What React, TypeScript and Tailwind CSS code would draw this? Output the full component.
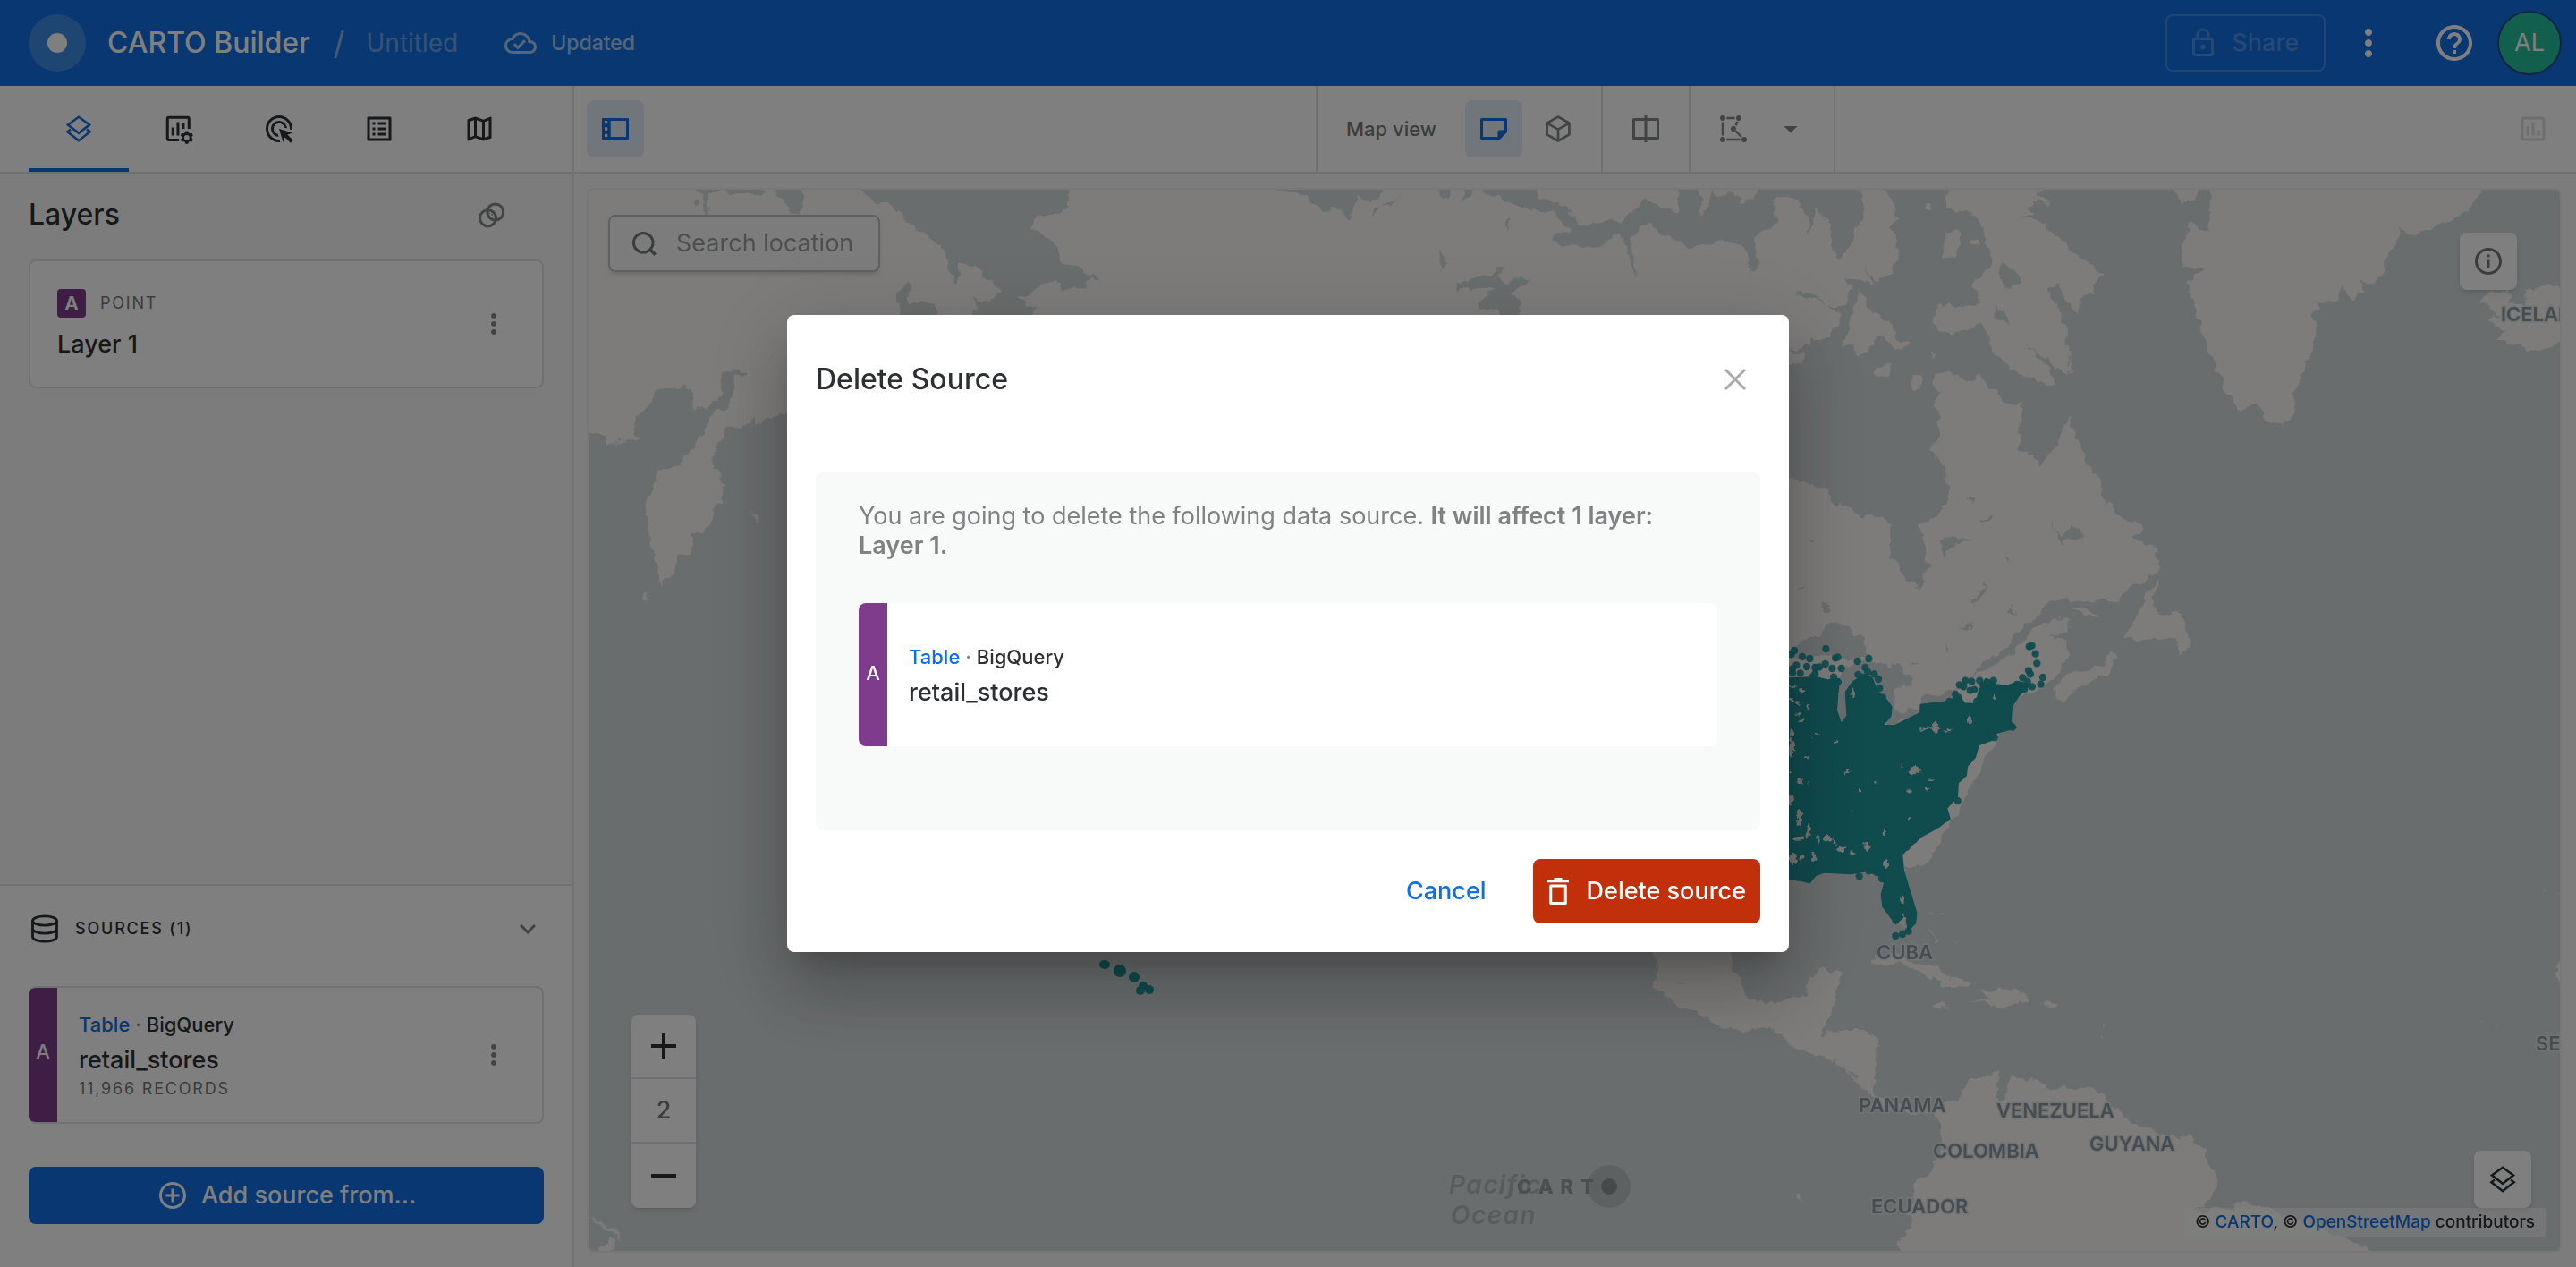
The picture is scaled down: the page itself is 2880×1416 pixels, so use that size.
import React from "react";
import {
  MdAdd,
  MdAddCircleOutline,
  MdArrowDropDown,
  MdExpandMore,
  MdHelpOutline,
  MdInfoOutline,
  MdLockOutline,
  MdMoreVert,
  MdOutlineAdsClick,
  MdOutlineCloudDone,
  MdOutlineInsertChart,
  MdOutlineListAlt,
  MdOutlineMap,
  MdRemove,
} from "react-icons/md";

type IconProps = { className?: string };

const iconSize = "size-9 shrink-0";

function LayersIcon({ className = iconSize }: IconProps) {
  return (
    <svg viewBox="0 0 24 24" className={className} fill="none" stroke="currentColor" strokeWidth="1.7" aria-hidden="true">
      <path d="M12 3.2 20 9l-8 6.2L4 9z" />
      <path d="M6 12.4 3.6 14.2 12 20.8l8.4-6.6-2.4-1.8" />
    </svg>
  );
}

function WidgetsIcon() {
  return (
    <svg viewBox="0 0 24 24" className={iconSize} fill="currentColor" aria-hidden="true">
      <path d="M4.5 2.5h14a2 2 0 0 1 2 2V12h-2V4.5h-14v14.9H12v2H4.5a2 2 0 0 1-2-2V4.500a2 2 0 0 1 2-2z" />
      <path d="M6.500 11h2v6h-2zM10.300 7h2v10h-2zM14.300 7.500h2v4.500h-2z" />
      <path
        fillRule="evenodd"
        d="M16.900 13.600h2l.35 1.300 1 .55 1.350-.35 1 1.750-.95.950v1.200l.95.950-1 1.750-1.350-.35-1 .55-.35 1.300h-2l-.35-1.300-1-.55-1.350.35-1-1.750.95-.95v-1.200l-.95-.95 1-1.750 1.350.35 1-.55zM17.900 16.700a1.900 1.900 0 1 0 0 3.800 1.900 1.900 0 0 0 0-3.800z"
      />
    </svg>
  );
}

function BlendIcon() {
  return (
    <svg viewBox="0 0 24 24" className={iconSize} fill="none" stroke="currentColor" strokeWidth="2" aria-hidden="true">
      <circle cx="9" cy="14.500" r="6" />
      <circle cx="14.500" cy="10" r="6" />
      <path d="M10 10.500v3M12 9.500v5M14 10.500v3" strokeWidth="1" strokeDasharray="1 1" />
    </svg>
  );
}

function DatabaseIcon() {
  return (
    <svg viewBox="0 0 24 24" className={iconSize} fill="none" stroke="currentColor" strokeWidth="1.900" aria-hidden="true">
      <ellipse cx="12" cy="6" rx="9" ry="3.400" />
      <path d="M3 6v12c0 1.900 4 3.400 9 3.400s9-1.500 9-3.400V6M3 12c0 1.900 4 3.400 9 3.400s9-1.500 9-3.400" />
    </svg>
  );
}

function SearchIcon() {
  return (
    <svg viewBox="0 0 24 24" className={iconSize} fill="none" stroke="currentColor" strokeWidth="2" aria-hidden="true">
      <circle cx="11.500" cy="11.500" r="7.200" />
      <path d="M16.500 16.500 20.500 20.500" strokeWidth="2.400" />
    </svg>
  );
}

function SidePanelIcon() {
  return (
    <svg viewBox="0 0 24 24" className={iconSize} fill="currentColor" fillRule="evenodd" aria-hidden="true">
      <path d="M2 4h20v16H2zM8.500 6v12H20V6zM4 6v2.200h2.200V6zM4 10.900v2.200h2.200v-2.200zM4 15.800V18h2.200v-2.200z" />
    </svg>
  );
}

function SheetIcon() {
  return (
    <svg viewBox="0 0 24 24" className={iconSize} fill="none" stroke="currentColor" strokeWidth="2" strokeLinejoin="round" aria-hidden="true">
      <path d="M3 5h18v9l-5 5H3z" />
      <path d="M21 14h-5v5z" fill="currentColor" />
    </svg>
  );
}

function CubeIcon() {
  return (
    <svg viewBox="0 0 24 24" className={iconSize} fill="none" stroke="currentColor" strokeWidth="1.800" strokeLinejoin="round" aria-hidden="true">
      <path d="M12 3l8.300 4.700v8.600L12 21l-8.300-4.700V7.700zM3.700 7.700 12 12.400l8.300-4.700M12 12.400V21" />
    </svg>
  );
}

function SplitIcon() {
  return (
    <svg viewBox="0 0 24 24" className={iconSize} fill="none" stroke="currentColor" strokeWidth="2" strokeLinejoin="round" aria-hidden="true">
      <path d="M3 5h18v14H3zM12 2v20" />
    </svg>
  );
}

function PolygonIcon() {
  return (
    <svg viewBox="0 0 24 24" className={iconSize} fill="currentColor" stroke="currentColor" strokeWidth="1.600" aria-hidden="true">
      <path fill="none" d="M7 4h6M4 7v10M7 20h10M15 6.500l-1.300 3M13.500 13.500l4.500 4.500" />
      <g stroke="none">
        <circle cx="4" cy="4" r="2" />
        <circle cx="16" cy="4" r="2" />
        <circle cx="12" cy="12" r="2" />
        <circle cx="4" cy="20" r="2" />
        <circle cx="20" cy="20" r="2" />
      </g>
    </svg>
  );
}

function TrashIcon() {
  return (
    <svg viewBox="0 0 24 24" className={iconSize} fill="none" stroke="currentColor" strokeWidth="2" aria-hidden="true">
      <path d="M6.500 8h11v13h-11z" strokeLinejoin="round" />
      <path d="M4 4.500h16M9 3h6" />
    </svg>
  );
}

/* ---------- Base map ---------- */

const WATER = "#d4dadc";
const LAND = "#faf8f4";
const STORE = "#20969c";

const storeDots: [number, number][] = [
  [154, 105], [48, 111], [38, 124], [75, 132], [100, 138], [186, 136], [194, 133], [260, 147], [298, 138],
  [286, 168], [152, 156], [90, 165], [118, 168], [132, 166], [55, 160], [42, 172], [175, 171], [206, 171],
  [68, 187], [42, 186], [118, 188], [316, 190], [294, 182], [330, 207], [276, 200], [255, 225], [262, 192], [334, 237],
  [345, 268], [300, 212], [180, 200], [195, 217], [108, 200], [845, 95], [836, 98], [857, 122], [862, 154], [834, 178],
  [840, 190], [814, 202], [882, 201], [875, 224], [846, 232], [830, 215], [820, 240], [795, 225], [602, 226],
  [622, 212], [643, 215], [652, 242], [638, 245], [616, 232], [588, 258], [598, 268], [670, 212], [682, 228],
  [716, 212], [697, 218], [712, 235], [740, 240], [765, 240], [780, 235], [800, 245], [568, 282], [660, 282],
  [596, 615], [450, 745], [425, 770], [266, 868], [298, 850], [325, 855], [342, 876], [388, 1068], [411, 1062],
  [431, 1052], [388, 1014], [720, 402], [705, 398], [780, 368], [764, 322], [615, 510], [518, 698], [95, 878], [60, 872],
];

const storeGaps: [number, number, number, number][] = [
  [452, 512, 20, 14], [520, 368, 12, 18], [490, 374, 22, 4], [560, 378, 16, 4], [636, 342, 6, 12], [246, 255, 5, 20],
  [356, 826, 10, 12], [411, 946, 5, 12], [414, 1020, 9, 20], [292, 768, 9, 14], [66, 550, 9, 14], [40, 440, 9, 34],
  [66, 672, 9, 30], [95, 718, 7, 24], [160, 742, 16, 10], [60, 742, 22, 7], [205, 778, 12, 8], [115, 802, 9, 14],
  [45, 808, 14, 20], [75, 808, 8, 12], [36, 612, 8, 16], [505, 545, 8, 4], [496, 573, 10, 4], [225, 517, 4, 9],
  [185, 421, 10, 3], [268, 583, 5, 4], [435, 674, 5, 4], [434, 582, 4, 5], [96, 560, 4, 10], [70, 345, 9, 6],
  [60, 290, 8, 5], [90, 470, 12, 4], [125, 392, 12, 3], [45, 232, 14, 4], [75, 245, 12, 5], [40, 275, 12, 5],
  [60, 325, 5, 8], [38, 388, 4, 12], [320, 552, 6, 3], [130, 742, 5, 10], [185, 752, 5, 10], [240, 790, 6, 4],
  [720, 268, 5, 5], [410, 495, 3, 10], [352, 722, 5, 10], [95, 300, 4, 6], [38, 520, 6, 5], [240, 658, 4, 3],
];

const mapLabels: { text: string; x: number; y: number }[] = [
  { text: "ICELAND", x: 2796, y: 359 },
  { text: "CUBA", x: 2098, y: 1072 },
  { text: "PANAMA", x: 2078, y: 1243 },
  { text: "VENEZUELA", x: 2232, y: 1249 },
  { text: "COLOMBIA", x: 2161, y: 1294 },
  { text: "GUYANA", x: 2336, y: 1286 },
  { text: "ECUADOR", x: 2092, y: 1356 },
  { text: "SENEGAL", x: 2835, y: 1174 },
];

function BaseMap() {
  return (
    <svg
      viewBox="658 212 2204 1186"
      preserveAspectRatio="xMidYMid slice"
      className="absolute inset-0 size-full"
      role="img"
      aria-label="World map with store locations"
    >
      <defs>
        <filter id="coast" filterUnits="userSpaceOnUse" x="600" y="150" width="2320" height="1310">
          <feTurbulence type="fractalNoise" baseFrequency="0.07" numOctaves="3" seed="4" />
          <feDisplacementMap in="SourceGraphic" scale="13" xChannelSelector="R" yChannelSelector="G" />
        </filter>
        <filter id="ragged" filterUnits="userSpaceOnUse" x="0" y="0" width="1000" height="1200">
          <feTurbulence type="fractalNoise" baseFrequency="0.06" numOctaves="2" seed="9" />
          <feDisplacementMap in="SourceGraphic" scale="24" xChannelSelector="R" yChannelSelector="G" />
        </filter>
      </defs>
      <rect x="600" y="150" width="2320" height="1310" fill={WATER} />

      <g filter="url(#coast)">
        {/* Asia and the north-western Pacific rim */}
        <g transform="translate(640 180) scale(.88 .3333)">
          <path
            fill={LAND}
            d="M-10 60V900L20 907 40 918 40 960 60 940 85 940 90 932 78 925 80 880 95 820 110 765 145 752 155 765 155 840 175 815 190 780 193 710 205 697 222 712 218 722 205 715 207 790 197 830 180 840 170 900 150 985 130 1030 112 1040 100 1100 95 1190 100 1290 108 1400 112 1430 130 1370 135 1320 150 1310 152 1250 175 1230 180 1180 178 1160 192 1140 190 1050 178 1020 182 960 195 890 205 890 215 905 232 855 234 890 245 860 262 847 300 847 1500 700V60z"
          />
          <path
            fill={WATER}
            d="M155 60V96L165 105 170 180H173L175 105 200 104 220 118 245 106 248 60zM150 120l8-5v30h-5zM258 60V96L262 130 275 150 276 185 290 180 294 130 288 96V60zM366 60V96L380 125 400 150 420 190 430 215 440 240 465 275 475 310 478 370 488 412 490 340 510 350 525 390 543 425 535 465 510 460 512 530H580L590 495 565 465 580 440 615 400 622 430 645 430 655 400 672 398 650 375 645 350 625 345 615 305 605 260 585 228 590 182 608 178 625 150 631 96V60zM425 402 430 475 445 468 462 480 465 530H415L412 440zM198 980l10-38 3 20-8 20z"
          />
          <path fill={LAND} d="M98 1440l-2 40h-4l2-30zM226 1170l10 30 2 20-8-20z" />
        </g>

        {/* Arctic Canada, Greenland, Labrador */}
        <g transform="translate(1980 180) scale(.574 .3954)">
          <path
            fill={LAND}
            d="M-300 60H60V81L75 200 90 125 110 140 118 230 133 280 155 240 165 160 180 155 170 60H205L248 130 240 160 250 165 228 185 245 210 250 260 235 310 208 340 180 290 200 345 145 330 160 360 140 410 105 410 80 375 50 372 90 400 137 422 130 470 115 495 75 500 75 525 35 530-300 530zM170 365 190 410 235 460 243 495 270 515 250 535 210 495 175 555 160 515 138 525zM20 525 65 545 60 575 20 585zM205 580 237 572 235 590 210 618 200 610zM278 605 290 615 283 652 273 635zM310 540l15 5-8 12z"
          />
          <path
            fill={LAND}
            d="M345 60H540L520 100 540 120 500 125 520 150 490 150 530 180 570 230 610 280 645 320 630 350 630 380 605 385 600 438 570 380 560 350 530 370 520 320 560 420 575 470 583 600 560 590 500 520 545 590 552 637 480 605 440 550 420 495 405 450 370 485 330 482 313 450 330 408 355 415 410 400 390 355 430 290 415 190 380 140 365 150 345 130zM335 200 365 195 375 240 360 272 335 272zM385 215l20 5v18l-20-8zM295 140l10-25 6 2-8 30z"
          />
          <path
            fill={LAND}
            d="M855 60H1400L1360 140 1340 165 1280 195 1245 210 1222 187 1225 215 1205 250 1190 320 1175 345 1150 340 1155 370 1130 390 1110 345 1105 390 1065 400 1070 425 1050 430 1065 480 1055 530 1035 580 1025 640 1015 700 1000 755 965 730 950 690 910 700 890 650 870 600 865 570 840 500 825 410 805 350 845 305 800 300 800 240 815 170 850 200 855 160zM775 60H835L830 105 800 115z"
          />
          <path
            fill={LAND}
            d="M1380 400 1405 365 1435 370 1440 400 1465 405 1475 365 1500 355 1570 355V500L1537 510 1495 540 1450 515 1415 510 1430 480 1390 450 1420 430z"
          />
          <path
            fill={LAND}
            d="M320 600 335 598 380 618 405 603 440 655 450 685 485 692 482 820 500 815 520 860 550 825 580 725 600 800 615 850 640 900 645 940 670 1000 700 1015 725 1040 700 1065 750 1090 757 1150 730 1185 700 1200 680 1240 640 1245 545 1242 525 1285 495 1310 470 1360 420 1410 395 1450 410 1445 470 1390 500 1330 550 1290 588 1295 570 1340 545 1345 575 1355 580 1400 560 1450 530 1480 470 1530 468 1568 300 2000-200 2000V905H60L100 925 130 965 170 995 172 1010 200 1002 232 1018 232 1110 250 1160 290 1215 300 1190 295 1160 307 1150 295 1060 285 1030 320 1005 345 965 347 920 335 860 308 820 330 770 320 700 327 655 315 630z"
          />
          <path
            fill={LAND}
            d="M555 1490 590 1440 600 1450 650 1420 660 1385 668 1400 655 1455 600 1485 565 1525 552 1510zM755 1185 735 1210 720 1270 690 1350 750 1355 790 1345 800 1390 818 1370 808 1310 795 1270 760 1285 740 1260zM585 1258 610 1262 638 1290 615 1285z"
          />
          <path
            fill={WATER}
            d="M455 290 485 320 490 345 455 365 448 320zM440 405 465 440 462 462 440 445zM545 1015 570 1065 590 1030 610 1065 575 1070 570 1095 560 1060zM325 1080 355 1060 388 1078 350 1090 340 1115zM422 1192 405 1215 390 1250 400 1248 412 1215zM405 1018l25-15v8l-20 12zM455 1110l14 8-3 14zM100 1250 112 1243 117 1275 103 1278zM456 1275l12-15 12 20zM368 1325l12-18 12 15zM380 950l16 10-5 12zM70 1075l16 0-5 8zM52 1210l16-12-3 10zM340 1360l8 10-2 14z"
          />
        </g>

        {/* North-western Canada inlets and lakes */}
        <g transform="translate(1440 0) scale(.9184 .3333)">
          <path
            fill={WATER}
            d="M-15 600V636L20 655 40 710 55 690 75 738 85 655 100 680 115 640 140 600zM140 640 125 690 105 700 102 730 115 690 130 670zM183 600V636L188 665 198 672 197 600zM213 600V636L210 670 222 670 229 600zM236 600V636L260 665 275 690 295 710 318 708 345 770 325 785 322 812 355 830 385 815 405 785 415 870 423 942 418 800 440 745 455 790 485 825 520 820 532 800 555 830 565 920 570 890 572 790 595 740 590 690 600 650 615 670 632 700 635 775 645 690 658 740 670 872 688 790 700 730 692 640 700 600H575L570 660 555 690 540 640 530 665 515 640 512 690 505 720 500 640 475 600 478 700 455 700 432 662 430 700 405 740 350 755 340 690 305 665 300 600zM265 887 240 925 205 950 205 980 230 960 248 965 245 1000 228 1010 235 1035 255 1040 258 1066 285 1066 280 1000 270 985 295 935 280 935 262 950 255 930zM267 735l4 0v30l-4 10zM183 840l5 15 6 25-7 28z"
          />
        </g>

        {/* Mexico, the Caribbean and South America */}
        <g transform="translate(1600 700) scale(.8163 .4566)">
          <path
            fill={WATER}
            d="M412 620 440 600 490 612 515 628 540 600 640 600 620 690 640 740 665 700 650 600 1000 300V770H412z"
          />
          <path
            fill={LAND}
            d="M295 740 310 850 305 880 330 920 350 935 385 970 430 993 460 978 500 1035 555 1065 580 1110 600 1140 620 1185 640 1180 665 1195 690 1190 697 1220 700 1270 690 1310 680 1345 660 1365 660 1410 650 1440 660 1455 640 1510 648 1560H1300L1275 1518 1250 1500 1215 1470 1150 1430 1105 1405 1100 1425 1065 1430 1045 1430 1075 1390 1078 1350 1065 1320 1060 1280 1040 1250 1000 1245 965 1220 940 1180 925 1165 920 1140 890 1130 850 1130 820 1105 795 1105 785 1160 770 1140 780 1085 760 1100 735 1110 720 1160 690 1180 660 1178 610 1150 605 1120 610 1060 612 1010 600 990 560 990 535 1000 555 900 565 845 535 842 518 860 510 905 460 928 435 910 425 870 412 830 412 740zM600 830 610 810 640 805 670 825 695 840 710 860 740 872 735 882 695 880 700 870 670 845 640 820zM755 890 780 885 800 895 822 920 790 922 780 940 765 925 740 922 765 915zM685 923 700 922 712 930 695 936zM840 922 860 925 855 935 840 933zM1538 850l12-30v50l-6-5zM500 1390l5 5 3 12-7-2z"
          />
          <path fill={WATER} d="M775 1115 785 1130 780 1160 770 1145zM335 874l10-2v4zM570 1085l15 15-4 6z" />
          <path fill="none" stroke={LAND} strokeWidth="2" d="M685 742l6 22-1 12M697 700l4 10M680 698l8 2M712 765l8 12M1527 640v6M1543 652v6M920 978v6M922 1000v6M1424 957v4M1440 970v4M1457 980v4" />
        </g>

        {/* Great Lakes and Saint Lawrence river */}
        <g transform="translate(1990 690) scale(.3333)">
          <path
            fill={WATER}
            d="M-20 150 60 90 130 60 150 20 230 20 250 60 285 65 285 110 300 135 270 140 200 130 100 130zM200 215 215 165 260 155 320 150 400 165 450 210 445 235 410 220 390 250 385 310 400 325 440 310 470 320 465 290 480 265 550 260 590 240 600 270 560 290 480 300 470 320 380 365 345 362 370 300 330 250 240 230 225 330 200 358 190 300zM435 148h30l-5 5h-20zM555 85l18 12-8 12zM605 40l20-20 22 20-22-6z"
          />
          <path fill="none" stroke={WATER} strokeWidth="8" d="M590 240 650 190 690 150 770 110" />
          <path fill={WATER} d="M750 118 790 60 850 0 930-30 870 20 810 80 775 112z" />
        </g>

        {/* Pacific islands in the lower-left corner */}
        <g transform="translate(640 1040) scale(.638 .3333)" fill={LAND}>
          <path d="M30 968 50 975 80 1008 88 1030 84 1045 79 1018zM45 1085 60 1030 75 1032 72 1050 65 1085z" />
        </g>
      </g>

      {/* Store points */}
      <g transform="translate(1990 690) scale(.3333)" fill={STORE}>
        <path
          stroke={STORE}
          strokeWidth="4"
          strokeLinejoin="round"
          d="M-10 205 120 200 160 210 200 205 195 250 190 310 205 355 225 330 220 250 245 215 290 190 310 205 328 250 350 265 375 300 372 330 345 362 385 362 470 320 472 292 560 282 600 262 620 288 655 290 670 240 690 205 725 225 760 230 800 215 840 225 800 265 778 300 775 350 793 370 720 390 715 410 667 428 655 470 628 500 625 530 598 555 595 600 560 640 570 675 530 705 475 735 435 770 410 795 415 850 440 930 458 990 455 1025 430 1050 422 1000 388 1028 345 970 340 930 350 890 330 865 290 850 240 860 150 855 120 865 100 890 60 880-10 872z"
        />
        <g fillOpacity="0.92">
          {storeDots.map(([x, y]) => (
            <circle key={`${x}-${y}`} cx={x} cy={y} r="12.500" />
          ))}
        </g>
        <g fill="#ece9e4" filter="url(#ragged)">
          {storeGaps.map(([x, y, rx, ry]) => (
            <ellipse key={`${x}-${y}`} cx={x} cy={y} rx={rx} ry={ry} />
          ))}
        </g>
      </g>
      <g fill={STORE}>
        <ellipse cx="1235" cy="1078" rx="6" ry="5" />
        <circle cx="1252" cy="1085" r="7" />
        <circle cx="1268" cy="1092" r="6" />
        <circle cx="1278" cy="1102" r="5" />
        <circle cx="1275" cy="1107" r="5" />
        <circle cx="1285" cy="1106" r="5" />
      </g>

      <g className="font-['Inter',sans-serif] text-[22px] font-semibold" fill="#8b99a4" stroke="#e4e7e7" strokeWidth="3" paintOrder="stroke">
        {mapLabels.map((label) => (
          <text key={label.text} x={label.x} y={label.y}>
            {label.text}
          </text>
        ))}
      </g>
      <g className="font-['Inter',sans-serif] text-[28px] font-semibold tracking-wider italic" fill="#b1b8be">
        <text x="1620" y="1334">Pacific</text>
        <text x="1622" y="1368">Ocean</text>
      </g>

      <circle cx="1799" cy="1326" r="24" fill="#bcc3c5" />
      <circle cx="1799" cy="1326" r="9" fill="#8f9496" />
      <text x="1696" y="1334" fill="#989da0" className="font-['Inter',sans-serif] text-[22px] font-extrabold tracking-[8px]">
        CART
      </text>
    </svg>
  );
}

/* ---------- Page parts ---------- */

function Header() {
  return (
    <header className="flex h-24 shrink-0 items-center bg-[#106fe2] pr-4 pl-8 text-white">
      <div className="flex size-16 items-center justify-center rounded-full bg-white/20">
        <span className="size-[22px] rounded-full bg-white" />
      </div>
      <h1 className="ml-6 text-[32px] leading-10 font-medium">CARTO Builder</h1>
      <span className="ml-[26px] text-[36px] leading-10 text-white/50">/</span>
      <span className="ml-6 text-[28px] leading-10 text-white/40">Untitled</span>
      <div className="ml-13 flex items-center gap-4 text-white/65">
        <MdOutlineCloudDone className={iconSize} />
        <span className="text-[23px] font-medium">Updated</span>
      </div>
      <div className="ml-auto flex items-center">
        <button disabled className="flex h-16 items-center gap-3.5 rounded-lg border-2 border-white/20 pr-7 pl-[22px] text-[27px] font-medium text-white/25">
          <MdLockOutline className={iconSize} />
          <span>Share</span>
        </button>
        <button aria-label="More options" className="ml-6">
          <MdMoreVert className="size-12" />
        </button>
        <button aria-label="Help" className="ml-12">
          <MdHelpOutline className="size-12" />
        </button>
        <button
          aria-label="Account"
          className="ml-6 flex size-[72px] items-center justify-center rounded-full border-2 border-[#284a86] bg-[#24bf9a] text-[27px]"
        >
          AL
        </button>
      </div>
    </header>
  );
}

const tabs = [
  { name: "Layers", icon: <LayersIcon />, active: true },
  { name: "Widgets", icon: <WidgetsIcon />, active: false },
  { name: "Interactions", icon: <MdOutlineAdsClick className={iconSize} />, active: false },
  { name: "Legend", icon: <MdOutlineListAlt className={iconSize} />, active: false },
  { name: "Basemaps", icon: <MdOutlineMap className={iconSize} />, active: false },
];

function Tabs() {
  return (
    <div role="tablist" className="flex h-[98px] shrink-0 border-b-2 border-[#e1e3e4] bg-white px-8">
      {tabs.map((tab) => (
        <button
          key={tab.name}
          role="tab"
          aria-label={tab.name}
          aria-selected={tab.active}
          className={
            tab.active
              ? "flex w-28 items-center justify-center border-b-4 border-[#106fe2] pt-1 text-[#106fe2]"
              : "flex w-28 items-center justify-center"
          }
        >
          {tab.icon}
        </button>
      ))}
    </div>
  );
}

function SourceTitle() {
  return (
    <>
      <p className="text-[22px] leading-8 font-medium">
        <a href="#source" className="text-[#106fe2]">Table</a>
        <span className="text-[#848889]"> · </span>
        BigQuery
      </p>
      <p className="mt-2 text-[27px] leading-8 font-medium">retail_stores</p>
    </>
  );
}

function Sidebar() {
  return (
    <aside className="flex w-[642px] shrink-0 flex-col border-r-2 border-[#e6e7e8] bg-[#f8f9f9]">
      <Tabs />
      <section className="flex-1 px-8 pt-[26px]">
        <div className="flex h-10 items-center justify-between pr-10">
          <h2 className="text-[32px] leading-10 font-medium">Layers</h2>
          <button aria-label="Layer blending" className="text-[#848889]">
            <BlendIcon />
          </button>
        </div>
        <article className="mt-[30px] flex h-36 items-center rounded-lg border-2 border-[#e1e3e4] bg-white pr-9 pl-[30px]">
          <div className="flex-1">
            <div className="flex items-center gap-4">
              <span className="flex size-8 items-center justify-center rounded bg-[#7f3c8d] text-[22px] font-semibold text-white">A</span>
              <span className="text-lg tracking-widest text-[#77797b]">POINT</span>
            </div>
            <h3 className="mt-3.5 text-[27px] leading-8 font-medium">Layer 1</h3>
          </div>
          <button aria-label="Layer options" className="text-[#848889]">
            <MdMoreVert className={iconSize} />
          </button>
        </article>
      </section>
      <section className="border-t-2 border-[#e1e3e4] bg-white px-8 pt-[30px] pb-12">
        <div className="flex items-center gap-4">
          <DatabaseIcon />
          <h2 className="flex-1 text-lg leading-9 font-medium tracking-widest">SOURCES (1)</h2>
          <button aria-label="Collapse sources" className="text-[#848889]">
            <MdExpandMore className={iconSize} />
          </button>
        </div>
        <article className="mt-[46px] flex h-[154px] items-stretch overflow-hidden rounded-lg border-2 border-l-0 border-[#e1e3e4]">
          <span className="flex w-8 items-center justify-center bg-[#7f3c8d] pb-2 text-[22px] font-medium text-white">A</span>
          <div className="flex flex-1 items-center pr-9 pl-6">
            <div className="flex-1 pt-1">
              <SourceTitle />
              <p className="text-lg leading-8 tracking-widest text-[#77797b]">11,966 RECORDS</p>
            </div>
            <button aria-label="Source options" className="text-[#848889]">
              <MdMoreVert className={iconSize} />
            </button>
          </div>
        </article>
        <button className="mt-12 flex h-16 w-full items-center justify-center gap-3.5 rounded-lg bg-[#106fe2] text-[27px] font-medium text-white">
          <MdAddCircleOutline className={iconSize} />
          <span>Add source from...</span>
        </button>
      </section>
    </aside>
  );
}

function Toolbar() {
  return (
    <div className="flex h-[98px] shrink-0 items-stretch border-b-2 border-[#e1e3e4] bg-white px-3.5 text-[#848889]">
      <div className="flex flex-1 items-center">
        <button aria-label="Toggle side panel" className="flex size-16 items-center justify-center rounded-lg bg-[#e2ecfb] text-[#106fe2]">
          <SidePanelIcon />
        </button>
      </div>
      <div className="flex items-center gap-2 border-x-2 border-[#e1e3e4] pr-4 pl-8">
        <span className="mr-6 text-[22px] font-medium text-[#77797b]">Map view</span>
        <button aria-label="2D view" className="flex size-16 items-center justify-center rounded-lg bg-[#e2ecfb] text-[#106fe2]">
          <SheetIcon />
        </button>
        <button aria-label="3D view" className="flex size-16 items-center justify-center">
          <CubeIcon />
        </button>
      </div>
      <div className="flex items-center border-r-2 border-[#e1e3e4] px-4">
        <button aria-label="Split view" className="flex size-16 items-center justify-center">
          <SplitIcon />
        </button>
      </div>
      <div className="flex items-center border-r-2 border-[#e1e3e4] px-4">
        <button aria-label="Polygon selection" className="flex size-16 items-center justify-center">
          <PolygonIcon />
        </button>
        <button aria-label="Selection modes" className="flex size-16 items-center justify-center">
          <MdArrowDropDown className={iconSize} />
        </button>
      </div>
      <div className="flex w-[814px] items-center justify-end pr-4">
        <button disabled aria-label="Show widgets" className="text-[#dcdcdd]">
          <MdOutlineInsertChart className={iconSize} />
        </button>
      </div>
    </div>
  );
}

const mapButton = "absolute flex size-16 items-center justify-center rounded-lg bg-white shadow-md";

function MapView() {
  return (
    <div className="flex flex-1 bg-[#f8f9f9] pt-4 pr-4 pb-4 pl-3.5">
      <div className="relative flex-1 overflow-hidden rounded-lg border-2 border-[#eeefef]">
        <BaseMap />
        <label className="absolute top-7 left-[22px] flex h-16 w-[304px] items-center gap-[18px] rounded-lg border-2 border-[#bfc1c1] bg-[#f8f9f9] px-5 text-[#77797b] shadow-md">
          <SearchIcon />
          <input
            type="text"
            aria-label="Search location"
            placeholder="Search location"
            className="w-full bg-transparent text-[27px] outline-none placeholder:text-[#9c9e9f]"
          />
        </label>
        <button aria-label="Map information" className={`${mapButton} top-12 right-12 text-[#77797b]`}>
          <MdInfoOutline className={iconSize} />
        </button>
        <div className="absolute bottom-12 left-12 flex w-[72px] flex-col divide-y-2 divide-[#e1e3e4] rounded-lg bg-white shadow-md">
          <button aria-label="Zoom in" className="flex h-[72px] items-center justify-center">
            <MdAdd className="size-12" />
          </button>
          <span className="flex h-[72px] items-center justify-center text-[27px] font-medium text-[#77797b]">2</span>
          <button aria-label="Zoom out" className="flex h-[72px] items-center justify-center">
            <MdRemove className="size-12" />
          </button>
        </div>
        <button aria-label="Legend" className={`${mapButton} right-8 bottom-12`}>
          <LayersIcon />
        </button>
        <p className="absolute right-4 bottom-4 bg-white/50 px-3 text-[19px] leading-8 font-medium">
          © <a href="#carto" className="text-[#106fe2]">CARTO</a>, ©{" "}
          <a href="#osm" className="text-[#106fe2]">OpenStreetMap</a> contributors
        </p>
      </div>
    </div>
  );
}

function DeleteDialog() {
  return (
    <div className="fixed inset-0 z-10 flex items-center justify-center bg-black/50">
      <div
        role="dialog"
        aria-modal="true"
        aria-labelledby="dialog-title"
        className="w-[1120px] rounded-lg bg-white p-8 shadow-[0_22px_30px_-14px_rgba(0,0,0,0.2),0_48px_76px_6px_rgba(0,0,0,0.14),0_18px_92px_16px_rgba(0,0,0,0.12)]"
      >
        <div className="flex h-20 items-center justify-between pr-2.5">
          <h2 id="dialog-title" className="text-[32px] leading-10 font-medium">Delete Source</h2>
          <button aria-label="Close" className="text-[#a8a9aa]">
            <svg viewBox="0 0 36 36" className={iconSize} stroke="currentColor" strokeWidth="3" aria-hidden="true">
              <path d="M7 7l22 22M29 7 7 29" />
            </svg>
          </button>
        </div>
        <div className="mt-16 h-[400px] rounded-lg bg-[#f8f9f9] px-12 pt-8">
          <p className="text-[27px] leading-[33px] text-[#7f8283]">
            You are going to delete the following data source.{" "}
            <strong className="font-semibold">It will affect 1 layer: Layer{"\u00a0"}1.</strong>
          </p>
          <div className="mt-12 flex h-40 overflow-hidden rounded-lg bg-white">
            <span className="flex w-8 items-center justify-center bg-[#7f3c8d] pb-1 text-[22px] font-medium text-white">A</span>
            <div className="flex flex-col justify-center pl-6">
              <SourceTitle />
            </div>
          </div>
        </div>
        <div className="mt-8 flex h-[72px] items-center justify-end gap-9 text-[27px] font-medium">
          <button className="h-full px-4 text-[#106fe2]">Cancel</button>
          <button className="flex h-full items-center gap-3.5 rounded-lg bg-[#c1300b] pr-4 pl-2.5 text-white">
            <TrashIcon />
            <span>Delete source</span>
          </button>
        </div>
      </div>
    </div>
  );
}

export default function App() {
  return (
    <div className="flex min-h-screen flex-col bg-white font-['Inter',sans-serif] text-[#2c3032]">
      <Header />
      <div className="flex flex-1">
        <Sidebar />
        <main className="flex min-w-0 flex-1 flex-col">
          <Toolbar />
          <MapView />
        </main>
      </div>
      <DeleteDialog />
    </div>
  );
}
